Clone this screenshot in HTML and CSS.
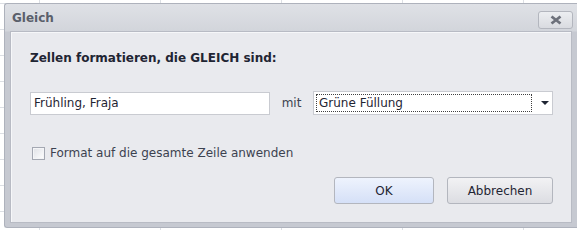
FILE: index.html
```html
<!DOCTYPE html>
<html lang="de">
<head>
    <meta charset="UTF-8">
    <title>Gleich</title>
    <link rel="stylesheet" href="styles.css">
</head>
<body>
    <div class="dialog">
        <div class="titlebar">
            <span class="title">Gleich</span>
            <button class="close-btn" aria-label="Schließen">
                <svg width="12" height="10" viewBox="0 0 12 10">
                    <path d="M1.5 1.5 L10.5 8.5 M10.5 1.5 L1.5 8.5" stroke="#6d717b" stroke-width="2.8" stroke-linecap="butt"/>
                </svg>
            </button>
        </div>

        <div class="panel">
            <h3 class="heading">Zellen formatieren, die GLEICH sind:</h3>

            <div class="rule-row">
                <input type="text" class="value-input" value="Frühling, Fraja">
                <span class="mit">mit</span>
                <div class="select">
                    <span class="select-text">Grüne Füllung</span>
                    <span class="select-arrow"></span>
                </div>
            </div>

            <label class="check-row">
                <span class="checkbox"></span>
                <span>Format auf die gesamte Zeile anwenden</span>
            </label>

            <div class="actions">
                <button class="btn btn-ok">OK</button>
                <button class="btn btn-cancel">Abbrechen</button>
            </div>
        </div>
    </div>
</body>
</html>
```

FILE: styles.css
```css
* {
    margin: 0;
    padding: 0;
    box-sizing: border-box;
    font-family: 'DejaVu Sans', Verdana, sans-serif;
}

body {
    width: 577px;
    height: 230px;
    overflow: hidden;
    background-color: #ffffff;
    background-image:
        repeating-linear-gradient(to bottom, transparent 0, transparent 3px, #dcdfe4 3px, #dcdfe4 4px, transparent 4px, transparent 26px),
        repeating-linear-gradient(to right, transparent 0, transparent 39px, #dcdfe4 39px, #dcdfe4 40px, transparent 40px, transparent 121px);
}

.dialog {
    margin: 3px 0 0 4px;
    width: 573px;
    height: 225px;
    background: linear-gradient(to bottom, #dfe1e6 0, #d2d5db 27px, #c6c9d1 28px, #c6c9d1 100%);
    border: 1px solid #aeb2bc;
    border-right: none;
    border-radius: 3px 0 0 3px;
    padding: 0 5px 4px 5px;
    display: flex;
    flex-direction: column;
}

.titlebar {
    height: 27px;
    display: flex;
    align-items: center;
    justify-content: space-between;
    padding-left: 2px;
}

.title {
    font-size: 12px;
    font-weight: bold;
    color: #5a5f6b;
}

.close-btn {
    width: 35px;
    height: 18px;
    margin-top: 4px;
    margin-right: -1px;
    border: 1px solid #b3b6be;
    border-radius: 3px;
    background: linear-gradient(to bottom, #eceef1, #d9dbe0);
    display: flex;
    align-items: center;
    justify-content: center;
}

.panel {
    flex: 1;
    background-color: #e9eaee;
    border: 1px solid #b8bbc4;
    box-shadow: inset 1px 1px 0 #f6f7f9;
    padding: 18px 18px 0 19px;
    display: flex;
    flex-direction: column;
}

.heading {
    font-size: 12px;
    font-weight: bold;
    line-height: 16px;
    color: #1f2533;
}

.rule-row {
    margin-top: 25px;
    display: flex;
    align-items: center;
    height: 24px;
}

.value-input {
    width: 240px;
    height: 23px;
    border: 1px solid #c9cbd1;
    background: #ffffff;
    padding: 0 3px;
    font-size: 12px;
    color: #1f2533;
    outline: none;
}

.mit {
    width: 43px;
    text-align: center;
    font-size: 12px;
    color: #3c4250;
}

.select {
    width: 240px;
    height: 24px;
    border: 1px solid #c9cbd1;
    background: #ffffff;
    display: flex;
    align-items: center;
    padding: 2px;
}

.select-text {
    width: 216px;
    height: 18px;
    border: 1px dotted #404040;
    font-size: 12px;
    line-height: 16px;
    padding-left: 2px;
    color: #1f2533;
}

.select-arrow {
    margin-left: 9px;
    width: 0;
    height: 0;
    border-left: 4px solid transparent;
    border-right: 4px solid transparent;
    border-top: 4px solid #1f2533;
}

.check-row {
    margin-top: 31px;
    display: flex;
    align-items: center;
    gap: 5px;
    margin-left: 2px;
    font-size: 12px;
    color: #3c4250;
}

.checkbox {
    width: 13px;
    height: 13px;
    border: 1px solid #a4a8b2;
    background: linear-gradient(to bottom right, #dfe1e6, #ffffff);
    box-shadow: inset 0 0 0 1px #f4f5f7;
}

.actions {
    margin-top: 17px;
    display: flex;
    justify-content: flex-end;
    gap: 13px;
}

.btn {
    height: 27px;
    border: 1px solid #b3b6be;
    border-radius: 3px;
    font-size: 12px;
    color: #1f2533;
}

.btn-ok {
    width: 100px;
    background: linear-gradient(to bottom, #eef3fd, #d5e0f7);
}

.btn-cancel {
    width: 106px;
    background: linear-gradient(to bottom, #f2f2f4, #dcdde2);
}
```
